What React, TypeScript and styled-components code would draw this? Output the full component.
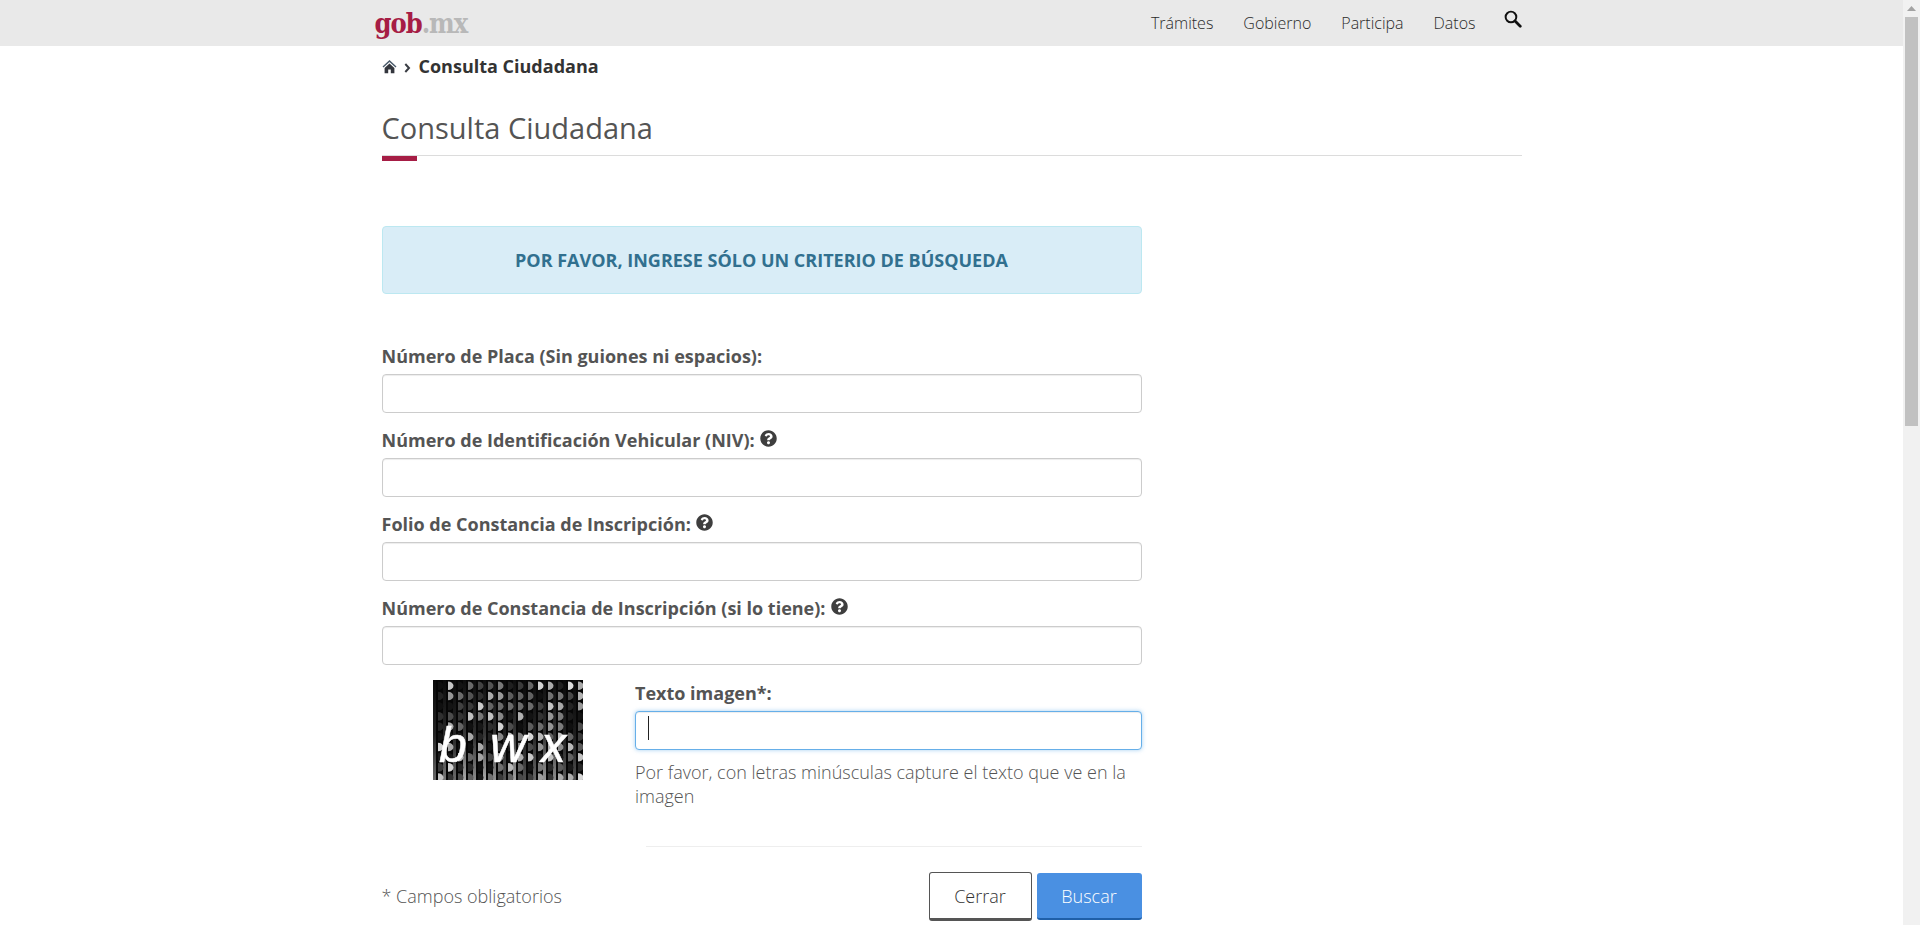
import React from 'react';
import styled, { createGlobalStyle } from 'styled-components';
import { FaQuestionCircle } from 'react-icons/fa';

const GlobalStyle = createGlobalStyle`
  html, body {
    margin: 0;
    padding: 0;
    height: 100%;
    overflow: hidden;
    background: #fff;
  }
  * { box-sizing: border-box; }
  body {
    font-family: "Open Sans", "Liberation Sans", sans-serif;
    color: #545454;
  }
`;

const Page = styled.div`
  display: flex;
  height: 925px;
  overflow: hidden;
`;

const Main = styled.div`
  flex: 1;
  min-width: 0;
`;

const Rail = styled.div`
  width: 17px;
  background: #f1f1f1;
  display: flex;
  flex-direction: column;
  align-items: center;
`;

const RailArrow = styled.div`
  height: 17px;
  width: 100%;
  display: flex;
  align-items: center;
  justify-content: center;
`;

const RailThumb = styled.div`
  width: 100%;
  height: 409px;
  background: #c1c1c1;
  border-left: 2px solid #f1f1f1;
  border-right: 2px solid #f1f1f1;
`;

const TopBar = styled.header`
  height: 46px;
  background: #e9e9e9;
`;

const TopInner = styled.div`
  width: 1170px;
  margin: 0 auto;
  height: 100%;
  display: flex;
  align-items: center;
  justify-content: space-between;
  padding-left: 8px;
  padding-right: 15px;
`;

const Logo = styled.div`
  font-family: "DejaVu Serif Condensed", "DejaVu Serif", "Liberation Serif", serif;
  font-weight: 700;
  font-size: 27px;
  letter-spacing: -1px;
  color: #a61d45;
`;

const LogoTail = styled.span`
  color: #b8b8b8;
`;

const Nav = styled.nav`
  display: flex;
  align-items: center;
  gap: 30px;
`;

const NavLink = styled.a`
  font-size: 16px;
  font-weight: 300;
  color: #2b2b2b;
`;

const SearchIcon = styled.svg`
  width: 18px;
  height: 18px;
  margin-top: -8px;
  margin-left: -2px;
`;

const Container = styled.main`
  width: 1170px;
  margin: 0 auto;
  padding: 0 15px;
`;

const Crumbs = styled.div`
  display: flex;
  align-items: center;
  height: 40px;
  font-size: 18px;
  font-weight: 700;
  color: #333;
`;

const CrumbHome = styled.svg`
  width: 15px;
  height: 15px;
  margin-right: 7px;
`;

const CrumbArrow = styled.svg`
  width: 7px;
  height: 10px;
  margin-top: 3px;
  margin-right: 8px;
`;

const Title = styled.h2`
  margin: 0;
  padding-top: 23px;
  font-size: 29px;
  line-height: 38px;
  font-weight: 400;
  color: #545454;
`;

const TitleRule = styled.div`
  position: relative;
  margin-top: 8px;
  height: 1px;
  background: #dcdcdc;
  &::after {
    content: '';
    position: absolute;
    left: 0;
    top: 1px;
    width: 35px;
    height: 5px;
    background: #a61d45;
  }
`;

const FormColumn = styled.form`
  width: 760px;
  margin-top: 70px;
`;

const Notice = styled.div`
  height: 68px;
  display: flex;
  align-items: center;
  justify-content: center;
  background: #d9edf7;
  border: 1px solid #bce8f1;
  border-radius: 4px;
  font-size: 18px;
  font-weight: 700;
  color: #31708f;
  margin-bottom: 49px;
`;

const Field = styled.div`
  margin-bottom: 14px;
`;

const Label = styled.label`
  display: block;
  font-size: 18px;
  line-height: 26px;
  font-weight: 700;
  color: #545454;
  margin-bottom: 5px;
`;

const HelpIcon = styled(FaQuestionCircle)`
  width: 17px;
  height: 17px;
  margin-left: 5px;
  vertical-align: 0;
  color: #3e3e3e;
`;

const TextBox = styled.input<{ $focused?: boolean }>`
  display: block;
  width: 100%;
  height: 39px;
  padding: 6px 12px;
  background: #fff;
  border: 1px solid ${(p) => (p.$focused ? '#66afe9' : '#ccc')};
  border-radius: 4px;
  box-shadow: ${(p) =>
    p.$focused
      ? 'inset 0 1px 1px rgba(0,0,0,.075), 0 0 4px rgba(102,175,233,.6)'
      : 'inset 0 1px 1px rgba(0,0,0,.075)'};
  outline: none;
`;

const CaptchaRow = styled.div`
  display: grid;
  grid-template-columns: 253.5px 1fr;
  margin-top: 15px;
`;

const CaptchaCell = styled.div`
  display: flex;
  justify-content: center;
  align-items: flex-start;
  padding-right: 1px;
`;

const CaptchaSide = styled.div`
  position: relative;
`;

const Caret = styled.span`
  position: absolute;
  left: 13px;
  top: 36px;
  width: 1px;
  height: 24px;
  background: #222;
`;

const Hint = styled.p`
  margin: 10px 0 0;
  font-size: 18px;
  line-height: 24px;
  font-weight: 300;
  color: #545454;
`;

const Divider = styled.hr`
  border: 0;
  border-top: 1px solid #eee;
  margin: 38px 0 25px 11px;
`;

const Footer = styled.div`
  display: flex;
  align-items: center;
  justify-content: space-between;
`;

const Mandatory = styled.span`
  font-size: 18px;
  font-weight: 300;
  color: #545454;
  margin-top: -2px;
`;

const Buttons = styled.div`
  display: flex;
  gap: 5px;
`;

const Button = styled.button<{ $primary?: boolean }>`
  width: ${(p) => (p.$primary ? '105px' : '103px')};
  height: ${(p) => (p.$primary ? '47px' : '49px')};
  margin-top: ${(p) => (p.$primary ? '1px' : '0')};
  font-family: inherit;
  font-size: 18px;
  font-weight: 300;
  border-radius: 3px;
  color: ${(p) => (p.$primary ? '#fff' : '#333')};
  background: ${(p) => (p.$primary ? '#4a90e2' : '#fff')};
  border: ${(p) => (p.$primary ? '0' : '1px solid #555')};
  border-bottom: ${(p) => (p.$primary ? '2px solid #1f5fa8' : '3px solid #555')};
`;

// pseudo captcha: dark cells with half moon dots and thin light vertical bars
const shade = (c: number, r: number) => {
  const v = Math.sin(c * 12.9898 + r * 78.233) * 43758.5453;
  return v - Math.floor(v);
};

const Captcha = () => {
  const cols = Array.from({ length: 15 }, (_, i) => i);
  const rows = Array.from({ length: 10 }, (_, i) => i);
  return (
    <svg width="150" height="100" viewBox="0 0 150 100">
      <defs>
        <linearGradient id="bar" x1="0" y1="0" x2="0" y2="1">
          <stop offset="0" stopColor="#0e0e0e" />
          <stop offset="0.55" stopColor="#3c3c3c" />
          <stop offset="1" stopColor="#b4b4b4" />
        </linearGradient>
      </defs>
      <rect width="150" height="100" fill="#060606" />
      {cols.map((c) => (
        <rect key={c} x={c * 10} y="0" width="3" height="100" fill="url(#bar)" opacity={0.4 + shade(c, 3) * 0.6} />
      ))}
      {cols.map((c) =>
        rows.map((r) => {
          const g = Math.round(15 + Math.pow(shade(c, r), 1.4) * 205);
          return (
            <path
              key={`${c}-${r}`}
              d={`M${c * 10 + 5} ${r * 10.2 + 1.5}a5.5 4.3 0 0 1 0 8.6z`}
              fill={`rgb(${g},${g},${g})`}
            />
          );
        }),
      )}
      <g fontFamily="'Liberation Sans', sans-serif" fontStyle="italic" fill="#fff" stroke="#fff" strokeWidth="0.5" fontSize="50">
        <text x="6" y="82">b</text>
        <text x="57" y="82">w</text>
        <text x="108" y="82">x</text>
      </g>
    </svg>
  );
};

const App: React.FC = () => {
  return (
    <>
      <GlobalStyle />
      <Page>
        <Main>
          <TopBar>
            <TopInner>
              <Logo>
                gob<LogoTail>.mx</LogoTail>
              </Logo>
              <Nav>
                <NavLink>Trámites</NavLink>
                <NavLink>Gobierno</NavLink>
                <NavLink>Participa</NavLink>
                <NavLink>Datos</NavLink>
                <SearchIcon viewBox="1 1 15.5 15.5">
                  <circle cx="7" cy="7" r="4.6" fill="none" stroke="#111" strokeWidth="1.7" />
                  <path d="M10.5 10.5L15 15" stroke="#111" strokeWidth="2.4" strokeLinecap="round" />
                </SearchIcon>
              </Nav>
            </TopInner>
          </TopBar>
          <Container>
            <Crumbs>
              <CrumbHome viewBox="0 0 15 15">
                <path d="M7.5 1L0.5 7.6l1 1L7.5 3l6 5.6 1-1z" fill="#4a5a6a" />
                <path d="M2.6 9L7.5 4.4 12.4 9v5.2H8.8v-3.6H6.2v3.6H2.6z" fill="#33363d" />
              </CrumbHome>
              <CrumbArrow viewBox="0 0 7 10">
                <path d="M1.3 1L5 5 1.3 9" fill="none" stroke="#3a3d44" strokeWidth="2" />
              </CrumbArrow>
              Consulta Ciudadana
            </Crumbs>
            <Title>Consulta Ciudadana</Title>
            <TitleRule />
            <FormColumn>
              <Notice>POR FAVOR, INGRESE SÓLO UN CRITERIO DE BÚSQUEDA</Notice>
              <Field>
                <Label>Número de Placa (Sin guiones ni espacios):</Label>
                <TextBox />
              </Field>
              <Field>
                <Label>
                  Número de Identificación Vehicular (NIV):
                  <HelpIcon />
                </Label>
                <TextBox />
              </Field>
              <Field>
                <Label>
                  Folio de Constancia de Inscripción:
                  <HelpIcon />
                </Label>
                <TextBox />
              </Field>
              <Field>
                <Label>
                  Número de Constancia de Inscripción (si lo tiene):
                  <HelpIcon />
                </Label>
                <TextBox />
              </Field>
              <CaptchaRow>
                <CaptchaCell>
                  <Captcha />
                </CaptchaCell>
                <CaptchaSide>
                  <Label>Texto imagen*:</Label>
                  <TextBox $focused />
                  <Caret />
                  <Hint>Por favor, con letras minúsculas capture el texto que ve en la imagen</Hint>
                  <Divider />
                </CaptchaSide>
              </CaptchaRow>
              <Footer>
                <Mandatory>* Campos obligatorios</Mandatory>
                <Buttons>
                  <Button type="button">Cerrar</Button>
                  <Button type="button" $primary>
                    Buscar
                  </Button>
                </Buttons>
              </Footer>
            </FormColumn>
          </Container>
        </Main>
        <Rail>
          <RailArrow>
            <svg width="9" height="5" viewBox="0 0 9 5">
              <path d="M4.5 0L9 5H0z" fill="#a3a3a3" />
            </svg>
          </RailArrow>
          <RailThumb />
        </Rail>
      </Page>
    </>
  );
};

export default App;
